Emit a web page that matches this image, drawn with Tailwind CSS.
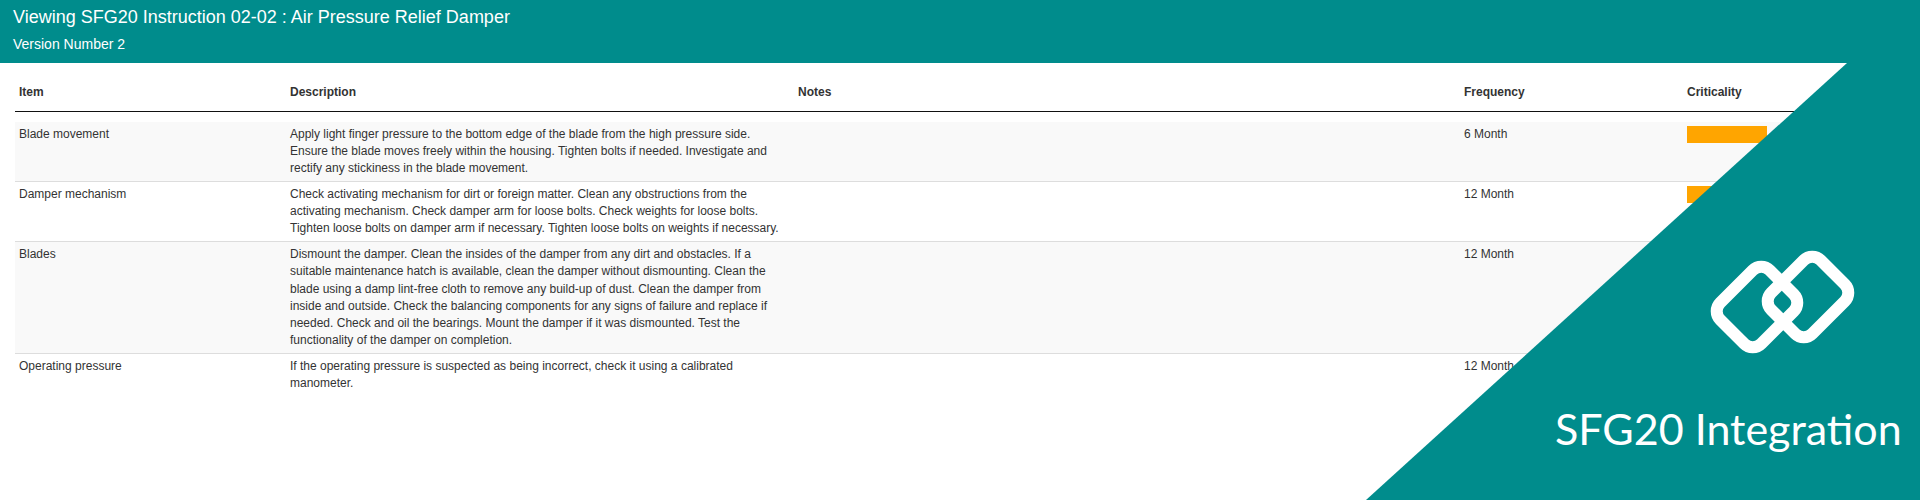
<!DOCTYPE html>
<html lang="en">
<head>
  <meta charset="UTF-8">
  <title>SFG20 Integration</title>
  <script src="https://cdn.jsdelivr.net/npm/@tailwindcss/browser@4"></script>
</head>
<body class="relative h-[500px] overflow-hidden bg-white text-[12px] leading-[17.14px] text-[#333] font-['Liberation_Sans',Arial,sans-serif]">
  <header class="h-[63px] bg-[#008c8c] pl-[13px] pt-[7px] text-white">
    <h1 class="text-[18px] leading-[20px]">Viewing SFG20 Instruction 02-02 : Air Pressure Relief Damper</h1>
    <p class="mt-[8px] text-[14px] leading-[18px]">Version Number 2</p>
  </header>

  <main class="px-[15px]">
    <div class="grid h-[49px] grid-cols-[271px_508px_666px_223px_1fr] border-b border-[#111] pl-[4px] pt-[21px] font-bold">
      <div>Item</div>
      <div>Description</div>
      <div>Notes</div>
      <div>Frequency</div>
      <div>Criticality</div>
    </div>

    <div class="mt-[9.5px]">
      <div class="grid grid-cols-[271px_508px_666px_223px_1fr] border-b border-[#ddd] bg-[#f9f9f9] py-[4px] pl-[4px]">
        <div>Blade movement</div>
        <div class="w-[495px]">Apply light finger pressure to the bottom edge of the blade from the high pressure side. Ensure the blade moves freely within the housing. Tighten bolts if needed. Investigate and rectify any stickiness in the blade movement.</div>
        <div></div>
        <div>6 Month</div>
        <div class="h-[17px] w-[80px] bg-[#ffa500]"></div>
      </div>
      <div class="grid grid-cols-[271px_508px_666px_223px_1fr] border-b border-[#ddd] py-[4px] pl-[4px]">
        <div>Damper mechanism</div>
        <div class="w-[495px]">Check activating mechanism for dirt or foreign matter. Clean any obstructions from the activating mechanism. Check damper arm for loose bolts. Check weights for loose bolts. Tighten loose bolts on damper arm if necessary. Tighten loose bolts on weights if necessary.</div>
        <div></div>
        <div>12 Month</div>
        <div class="h-[17px] w-[80px] bg-[#ffa500]"></div>
      </div>
      <div class="grid grid-cols-[271px_508px_666px_223px_1fr] border-b border-[#ddd] bg-[#f9f9f9] py-[4px] pl-[4px]">
        <div>Blades</div>
        <div class="w-[495px]">Dismount the damper. Clean the insides of the damper from any dirt and obstacles. If a suitable maintenance hatch is available, clean the damper without dismounting. Clean the blade using a damp lint-free cloth to remove any build-up of dust. Clean the damper from inside and outside. Check the balancing components for any signs of failure and replace if needed. Check and oil the bearings. Mount the damper if it was dismounted. Test the functionality of the damper on completion.</div>
        <div></div>
        <div>12 Month</div>
        <div></div>
      </div>
      <div class="grid grid-cols-[271px_508px_666px_223px_1fr] py-[4px] pl-[4px]">
        <div>Operating pressure</div>
        <div class="w-[495px]">If the operating pressure is suspected as being incorrect, check it using a calibrated manometer.</div>
        <div></div>
        <div>12 Month</div>
        <div></div>
      </div>
    </div>
  </main>

  <!-- banner corner -->
  <svg class="absolute left-0 top-0" width="1920" height="500" viewBox="0 0 1920 500">
    <polygon points="1847,63 1920,63 1920,500 1366,500" fill="#008c8c" />
    <g fill="none" stroke="#fff" stroke-width="12">
      <rect x="-35" y="-29" width="70" height="58" rx="12" transform="translate(1757 307) rotate(-45)" />
      <rect x="-35" y="-29" width="70" height="58" rx="12" transform="translate(1808 297) rotate(-45)" />
    </g>
  </svg>
  <div class="absolute left-[1555px] top-[402px] text-[43px] leading-[54px] text-white font-['Lato',sans-serif]">SFG20 Integration</div>
</body>
</html>
